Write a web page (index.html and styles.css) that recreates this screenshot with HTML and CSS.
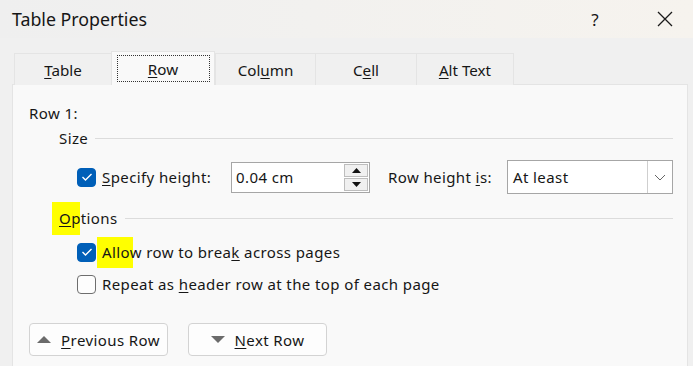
FILE: index.html
```html
<!DOCTYPE html>
<html>
<head>
<meta charset="utf-8">
<link rel="stylesheet" href="styles.css">
</head>
<body>
<div class="window">
  <div class="titlebar">
    <span class="title">Table Properties</span>
    <span class="help">?</span>
    <span class="close">
      <svg width="16" height="16" viewBox="0 0 16 16"><path d="M1 1 L15 15 M15 1 L1 15" stroke="#1a1a1a" stroke-width="1.3" fill="none"/></svg>
    </span>
  </div>
  <div class="body">
    <div class="tabs">
      <div class="tab t-table"><span><u>T</u>able</span></div>
      <div class="tab t-row active"><span class="focus"><u>R</u>ow</span></div>
      <div class="tab t-col"><span>Col<u>u</u>mn</span></div>
      <div class="tab t-cell"><span>C<u>e</u>ll</span></div>
      <div class="tab t-alt"><span><u>A</u>lt Text</span></div>
    </div>
    <div class="panel">
      <div class="row r-title">Row 1:</div>
      <div class="group r-size">
        <span class="glabel">Size</span><span class="gline"></span>
      </div>
      <div class="r-spec">
        <span class="cb checked"><svg width="12" height="10" viewBox="0 0 12 10"><path d="M1.5 5 L4.5 8 L10.5 2" stroke="#fff" stroke-width="1.4" fill="none"/></svg></span>
        <span class="spec-label"><u>S</u>pecify height:</span>
        <span class="input">
          <span class="val">0.04 cm</span>
          <span class="spin">
            <span class="sbtn"><svg width="9" height="5" viewBox="0 0 9 5"><path d="M0 5 L4.5 0 L9 5 Z" fill="#111"/></svg></span>
            <span class="sbtn"><svg width="9" height="5" viewBox="0 0 9 5"><path d="M0 0 L4.5 5 L9 0 Z" fill="#111"/></svg></span>
          </span>
        </span>
        <span class="rh-label">Row height <u>i</u>s:</span>
        <span class="select">
          <span class="val">At least</span>
          <span class="arrow"><svg width="12" height="7" viewBox="0 0 12 7"><path d="M1 1 L6 6 L11 1" stroke="#666" stroke-width="1" fill="none"/></svg></span>
        </span>
      </div>
      <div class="group r-opts">
        <span class="glabel hlwrap"><span class="hl hl-opt"></span><span class="txt"><u>O</u>ptions</span></span><span class="gline"></span>
      </div>
      <div class="check r-allow">
        <span class="cb checked"><svg width="12" height="10" viewBox="0 0 12 10"><path d="M1.5 5 L4.5 8 L10.5 2" stroke="#fff" stroke-width="1.4" fill="none"/></svg></span>
        <span class="clabel hlwrap"><span class="hl hl-allow"></span><span class="txt">Allow row to brea<u>k</u> across pages</span></span>
      </div>
      <div class="check r-repeat">
        <span class="cb"></span>
        <span class="clabel">Repeat as <u>h</u>eader row at the top of each page</span>
      </div>
      <div class="buttons">
        <button class="btn b-prev"><svg width="14" height="7" viewBox="0 0 14 7"><path d="M0 7 L7 0 L14 7 Z" fill="#6b6b6b"/></svg><span><u>P</u>revious Row</span></button>
        <button class="btn b-next"><svg width="14" height="7" viewBox="0 0 14 7"><path d="M0 0 L7 7 L14 0 Z" fill="#6b6b6b"/></svg><span><u>N</u>ext Row</span></button>
      </div>
    </div>
  </div>
</div>
</body>
</html>
```

FILE: styles.css
```css
html, body {
  margin: 0;
  padding: 0;
  width: 693px;
  height: 366px;
  overflow: hidden;
}
body {
  font-family: "Noto Sans", "Open Sans", sans-serif;
  color: #161616;
  background: #f0f0f0;
}
u { text-decoration-thickness: 1px; text-underline-offset: 2px; }

.window { display: flex; flex-direction: column; height: 366px; }

.titlebar {
  height: 38px;
  flex: none;
  display: flex;
  align-items: center;
  background: linear-gradient(90deg, #efefef 0%, #f2f1ef 45%, #f6f3ee 100%);
}
.title {
  margin-left: 12px;
  font-size: 17.8px;
  flex: 1;
}
.help {
  font-size: 17px;
  width: 20px;
  text-align: center;
  margin-right: 52px;
}
.close { width: 16px; height: 16px; margin-right: 20px; display: flex; }

.body {
  flex: 1;
  padding: 14px 5px 0 12px;
  display: flex;
  flex-direction: column;
}

.tabs {
  display: flex;
  height: 33px;
  padding-left: 2px;
  align-items: flex-end;
  position: relative;
  z-index: 1;
  margin-bottom: -1px;
}
.tab {
  height: 32px;
  box-sizing: border-box;
  border: 1px solid #e4e4e4;
  border-bottom: none;
  border-right: none;
  display: flex;
  align-items: center;
  justify-content: center;
  font-size: 15.2px;
  background: #f0f0f0;
}
.t-table { width: 97px; }
.t-row { width: 104px; }
.t-col { width: 100px; }
.t-cell { width: 101px; }
.t-alt { width: 98px; border-right: 1px solid #e4e4e4; }
.tab.active {
  height: 34px;
  background: #f9f9f9;
  border: 1px solid #e4e4e4;
  border-bottom: none;
  padding-bottom: 1px;
}
.focus {
  width: 93px;
  height: 27px;
  box-sizing: border-box;
  border: 1px dotted #333;
  display: flex;
  align-items: center;
  justify-content: center;
  margin-top: 1px;
}

.panel {
  flex: 1;
  background: #f9f9f9;
  border: 1px solid #e4e4e4;
  border-bottom: none;
  padding: 18px 14px 0 16px;
  font-size: 15px;
  letter-spacing: 0.4px;
  display: flex;
  flex-direction: column;
}
.row { height: 20px; line-height: 20px; }

.group {
  display: flex;
  align-items: center;
  height: 20px;
  line-height: 20px;
  margin-left: 30px;
}
.gline { flex: 1; height: 1px; background: #dcdcdc; margin-left: 7px; }
.r-size { margin-top: 5px; }

.r-spec {
  margin-top: 12px;
  margin-left: 48px;
  display: flex;
  align-items: center;
  height: 34px;
}
.cb {
  width: 19px;
  height: 19px;
  box-sizing: border-box;
  border-radius: 4px;
  border: 1px solid #6e6e6e;
  background: #fdfdfd;
  display: flex;
  align-items: center;
  justify-content: center;
  flex: none;
}
.cb.checked { background: #005fb8; border-color: #005fb8; }
.spec-label { width: 129px; margin-left: 6px; white-space: nowrap; }
.input {
  width: 139px;
  height: 31px;
  box-sizing: border-box;
  border: 1px solid #a6a6a6;
  background: #fff;
  display: flex;
  align-items: center;
}
.input .val { flex: 1; padding-left: 4px; }
.spin {
  display: flex;
  flex-direction: column;
  gap: 1px;
  margin-right: 1px;
}
.sbtn {
  width: 24px;
  height: 13px;
  box-sizing: border-box;
  border: 1px solid #bdbdbd;
  background: #f0f0f0;
  display: flex;
  align-items: center;
  justify-content: center;
}
.rh-label { margin-left: 18px; width: 119px; white-space: nowrap; }
.select {
  width: 166px;
  height: 34px;
  box-sizing: border-box;
  border: 1px solid #a6a6a6;
  background: #fff;
  display: flex;
  align-items: stretch;
}
.select .val { flex: 1; padding-left: 5px; display: flex; align-items: center; }
.arrow {
  width: 24px;
  border-left: 1px solid #cfcfcf;
  display: flex;
  align-items: center;
  justify-content: center;
}

.r-opts { margin-top: 14px; }
.hlwrap { position: relative; }
.hl { position: absolute; background: #ffff00; z-index: 0; }
.txt { position: relative; z-index: 1; }
.hl-opt { left: -7px; width: 28px; top: -6px; height: 33px; }
.hl-allow { left: -5px; width: 36px; top: -5px; height: 31px; }

.check {
  display: flex;
  align-items: center;
  height: 20px;
  line-height: 20px;
  margin-left: 48px;
}
.clabel { margin-left: 6px; white-space: nowrap; }
.r-allow { margin-top: 14px; }
.r-repeat { margin-top: 12px; }

.buttons {
  margin-top: 29px;
  display: flex;
  gap: 20px;
  margin-left: 0;
}
.btn {
  width: 139px;
  height: 33px;
  box-sizing: border-box;
  border: 1px solid #d3d3d3;
  border-radius: 4px;
  background: #fdfdfd;
  font-family: inherit;
  font-size: 15px;
  letter-spacing: 0.4px;
  color: #161616;
  display: flex;
  align-items: center;
  justify-content: center;
  gap: 10px;
  padding: 0;
}
```
